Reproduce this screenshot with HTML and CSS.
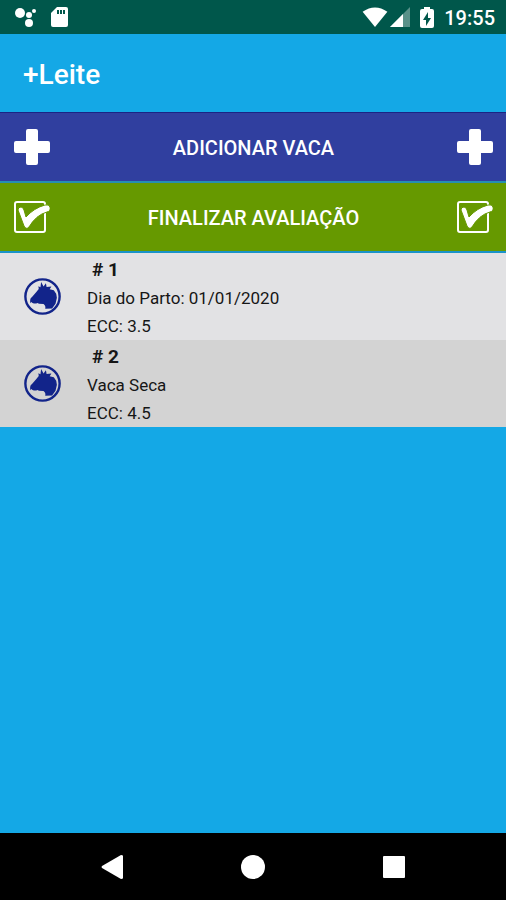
FILE: index.html
```html
<!DOCTYPE html>
<html lang="pt-BR">
<head>
<meta charset="utf-8">
<meta name="viewport" content="width=device-width, initial-scale=1">
<title>+Leite</title>
<link rel="stylesheet" href="styles.css">
</head>
<body>
<svg class="symbols" aria-hidden="true">
  <symbol id="plus" viewBox="0 0 36 36"><path d="M14 0h8q2 0 2 2v10h10q2 0 2 2v8q0 2-2 2H24v10q0 2-2 2h-8q-2 0-2-2V24H2q-2 0-2-2v-8q0-2 2-2h10V2q0-2 2-2z"/></symbol>
  <symbol id="check" viewBox="0 0 36 36"><rect x="1" y="3" width="30" height="30" rx="2" fill="none" stroke="currentColor" stroke-width="2"/><path d="M4 11q0-3 3-3 2 0 3 3l2 7Q20 9 31 6q4-1 5 2 1 4-3 5-11 3-18 15-3 3-5-1z" stroke="#690" stroke-width="1"/></symbol>
  <symbol id="cow" viewBox="0 0 108 108"><circle cx="54" cy="54" r="50" fill="none" stroke="currentColor" stroke-width="7"/><path d="M18 64q0-5 6-9l12-14 7-9-1-8 6 3 2-15 7 13 7-10 2 11 14-1-5 8 12 3 7 10 2 12-4 17-10 14-20 1q2-9-5-14l-13-1-5-2q-6 3-14 0l-4-3-3 4z"/></symbol>
</svg>
<header class="status">
  <svg class="dots" viewBox="0 0 22 22"><circle cx="5" cy="7" r="5"/><circle cx="14" cy="9" r="3"/><circle cx="19" cy="5" r="2"/><circle cx="14" cy="17" r="4"/></svg>
  <svg class="card" viewBox="0 0 17 22"><path d="M6 1h9q2 0 2 2v16q0 2-2 2H2q-2 0-2-2V7z"/><path class="cut" d="M6 4h2v4H6zM9 4h2v4H9zM12 4h2v4h-2z"/></svg>
  <span class="spacer"></span>
  <svg class="wifi" viewBox="0 0 26 21"><path d="M0 5q13-9 26 0L13 21z"/></svg>
  <svg class="signal" viewBox="0 0 20 20"><path opacity=".35" d="M20 0v20H0z"/><path d="M13 7v13H0z"/></svg>
  <svg class="battery" viewBox="0 0 14 21"><path d="M4 0h6v2h2q2 0 2 2v15q0 2-2 2H2q-2 0-2-2V4q0-2 2-2h2z"/><path class="cut" d="M8 5v6h3l-5 8v-6H3z"/></svg>
  <time>19:55</time>
</header>
<div class="appbar"><h1>+Leite</h1></div>
<main>
  <button class="action add" type="button"><svg><use href="#plus"/></svg><span>ADICIONAR VACA</span><svg><use href="#plus"/></svg></button>
  <button class="action finish" type="button"><svg><use href="#check"/></svg><span>FINALIZAR AVALIAÇÃO</span><svg><use href="#check"/></svg></button>
  <ul class="cows">
    <li><svg><use href="#cow"/></svg><div><h2># 1</h2><p>Dia do Parto: 01/01/2020</p><p>ECC: 3.5</p></div></li>
    <li><svg><use href="#cow"/></svg><div><h2># 2</h2><p>Vaca Seca</p><p>ECC: 4.5</p></div></li>
  </ul>
</main>
<nav class="system">
  <button type="button" aria-label="Voltar"><svg viewBox="0 0 24 24"><path d="M2 11 21 0q2 0 2 1v22q0 1-2 1L2 13q-1-1 0-2z"/></svg></button>
  <button type="button" aria-label="Início"><svg viewBox="0 0 24 24"><circle cx="12" cy="12" r="12"/></svg></button>
  <button type="button" aria-label="Recentes"><svg viewBox="0 0 24 24"><rect x="1" y="1" width="22" height="22" rx="1"/></svg></button>
</nav>
</body>
</html>
```
FILE: styles.css
```css
* { box-sizing: border-box; margin: 0; padding: 0; }
body {
  min-height: 100vh;
  display: flex;
  flex-direction: column;
  background: #14a8e6;
  color: #161616;
  font-family: Roboto, sans-serif;
}
svg { fill: currentColor; flex: none; }
button { border: 0; font: inherit; color: #fff; }
.symbols { position: absolute; width: 0; height: 0; }
.status {
  display: flex;
  align-items: center;
  height: 34px;
  padding: 0 11px 0 15px;
  background: #00574b;
  color: #fff;
}
.cut { fill: #00574b; }
.dots { width: 22px; height: 22px; }
.card { width: 17px; height: 22px; margin-left: 14px; }
.spacer { flex: 1; }
.wifi { width: 26px; height: 20px; }
.signal { width: 20px; height: 20px; margin-left: 2px; }
.battery { width: 14px; height: 21px; margin: 0 10px; }
.status time { font-size: 20px; font-weight: 500; line-height: 24px; padding-top: 2px; }
.appbar {
  display: flex;
  align-items: center;
  height: 78px;
  padding: 4px 23px 0;
  color: #fff;
}
.appbar h1 { font-size: 28px; font-weight: 500; line-height: 32px; }
main { flex: 1; }
.action {
  display: flex;
  align-items: center;
  justify-content: space-between;
  width: 100%;
  height: 69px;
  padding: 0 13px 0 14px;
  font-size: 20px;
  font-weight: 500;
}
.action span { padding-top: 2px; }
.action svg { width: 36px; height: 36px; }
.add { background: #303f9f; border-top: 1px solid #1b2484; }
.finish {
  height: 72px;
  background: #690;
  border-top: 2px solid #268fb0;
  border-bottom: 2px solid #1a93c8;
}
.cows { list-style: none; }
.cows li {
  display: flex;
  align-items: center;
  height: 87px;
  padding-left: 24px;
  background: #e2e2e4;
}
.cows li:nth-child(even) { background: #d3d3d3; }
.cows svg { width: 37px; height: 37px; color: #12248a; }
.cows div { margin-left: 26px; padding-top: 3px; }
.cows h2 { font-size: 19px; font-weight: 700; line-height: 28px; padding-left: 5px; }
.cows p { font-size: 17px; line-height: 28px; }
.system {
  display: flex;
  justify-content: center;
  align-items: center;
  gap: 117px;
  height: 67px;
  background: #000;
}
.system button { display: flex; background: none; }
.system svg { width: 24px; height: 24px; }
```
